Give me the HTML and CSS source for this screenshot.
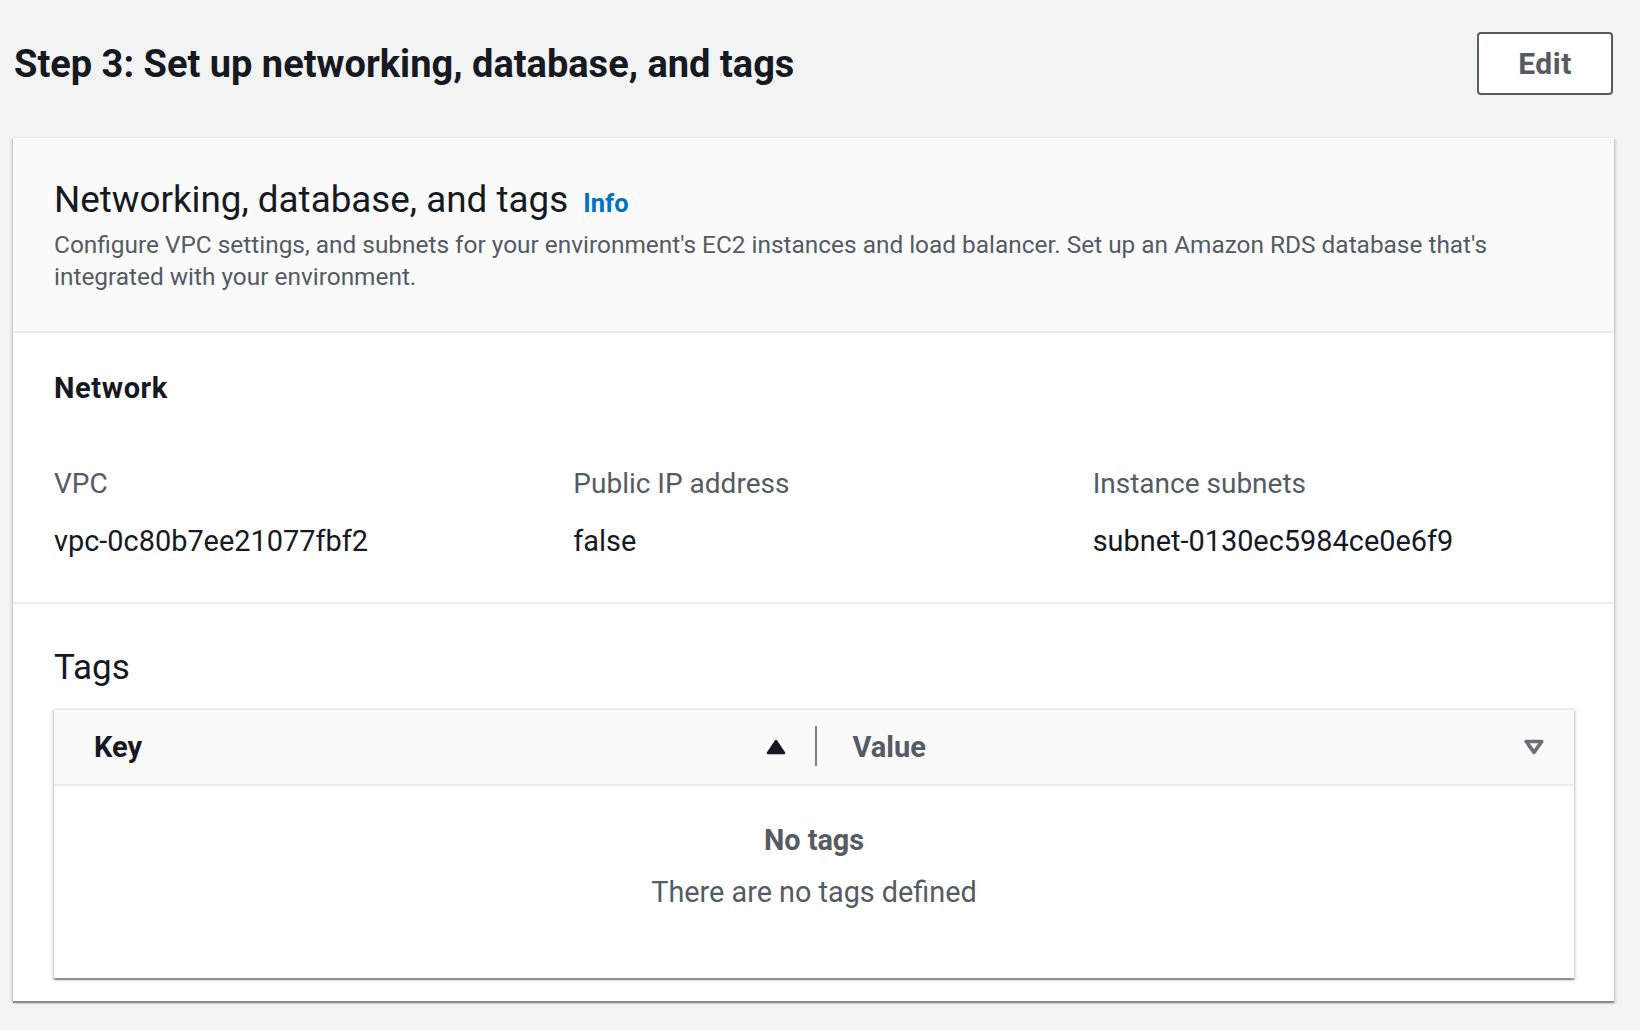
FILE: index.html
```html
<!DOCTYPE html>
<html lang="en">
<head>
<meta charset="utf-8">
<title>Step 3: Set up networking, database, and tags</title>
<link rel="stylesheet" href="styles.css">
</head>
<body>
<div class="page">
  <header class="step-header">
    <h2 class="step-title">Step 3: Set up networking, database, and tags</h2>
    <button class="btn" type="button">Edit</button>
  </header>
  <section class="card">
    <div class="card-header">
      <h3 class="card-title">Networking, database, and tags <a class="info" href="#">Info</a></h3>
      <p class="card-desc">Configure VPC settings, and subnets for your environment's EC2 instances and load balancer. Set up an Amazon RDS database that's integrated with your environment.</p>
    </div>
    <div class="card-section network">
      <h4 class="sub-title">Network</h4>
      <div class="kv-grid">
        <div class="kv">
          <div class="kv-label">VPC</div>
          <div class="kv-value">vpc-0c80b7ee21077fbf2</div>
        </div>
        <div class="kv">
          <div class="kv-label">Public IP address</div>
          <div class="kv-value">false</div>
        </div>
        <div class="kv">
          <div class="kv-label">Instance subnets</div>
          <div class="kv-value">subnet-0130ec5984ce0e6f9</div>
        </div>
      </div>
    </div>
    <div class="card-section tags">
      <h3 class="tags-title">Tags</h3>
      <div class="table">
        <div class="thead">
          <div class="th th-key">
            <span>Key</span>
            <svg class="sort-icon" width="20" height="16" viewBox="0 0 20 16"><path d="M10 2 L18 14 L2 14 Z" fill="#16191f" stroke="#16191f" stroke-width="2.5" stroke-linejoin="round"/></svg>
          </div>
          <div class="th th-value">
            <span>Value</span>
            <svg class="sort-icon" width="20" height="16" viewBox="0 0 20 16"><path d="M2.2 2.5 L17.8 2.5 L10 13.4 Z" fill="none" stroke="#687078" stroke-width="3.6" stroke-linejoin="round"/></svg>
          </div>
        </div>
        <div class="tbody">
          <div class="empty-title">No tags</div>
          <div class="empty-desc">There are no tags defined</div>
        </div>
      </div>
    </div>
  </section>
</div>
</body>
</html>
```

FILE: styles.css
```css
* { box-sizing: border-box; }
html, body { margin: 0; padding: 0; }
body {
  background: #f2f3f3;
  font-family: Roboto, "Liberation Sans", Arial, sans-serif;
  color: #16191f;
  width: 1640px;
  height: 1030px;
  overflow: hidden;
}
.page {
  padding: 32px 26px 0 13px;
}
.step-header {
  display: flex;
  align-items: center;
  justify-content: space-between;
  height: 63px;
}
.step-title {
  margin: 0 0 0 1px;
  font-size: 38px;
  line-height: 48px;
  font-weight: 700;
  color: #16191f;
}
.btn {
  width: 136px;
  height: 63px;
  border: 2px solid #545b64;
  border-radius: 4px;
  background: #fff;
  color: #545b64;
  font-family: inherit;
  font-size: 30px;
  letter-spacing: 0.5px;
  font-weight: 700;
  padding: 0;
  margin-right: 1px;
}
.card {
  margin-top: 42px;
  background: #fff;
  border-top: 1px solid #eaeded;
  box-shadow: 0 2px 1px 0 rgba(0,28,36,.35), 2px 2px 2px 0 rgba(0,28,36,.12), -2px 2px 2px 0 rgba(0,28,36,.12);
}
.card-header {
  background: #fafafa;
  padding: 40px 40px 38px 41px;
  border-bottom: 2px solid #eaeded;
}
.card-title {
  margin: 0;
  font-size: 36.8px;
  line-height: 44px;
  font-weight: 400;
  color: #16191f;
}
.info {
  margin-left: 6px;
  font-size: 25.5px;
  font-weight: 700;
  color: #0073bb;
  text-decoration: none;
}
.card-desc {
  margin: 4px 0 0;
  font-size: 24.4px;
  line-height: 32px;
  color: #545b64;
}
.card-section {
  padding: 0 40px 0 41px;
}
.network {
  padding-top: 35px;
  padding-bottom: 41px;
  border-bottom: 2px solid #eaeded;
}
.sub-title {
  margin: 0;
  font-size: 29px;
  letter-spacing: 0.6px;
  line-height: 40px;
  font-weight: 700;
}
.kv-grid {
  margin-top: 56px;
  display: grid;
  grid-template-columns: repeat(3, 1fr);
  column-gap: 38px;
}
.kv-label {
  font-size: 28px;
  line-height: 40px;
  color: #545b64;
}
.kv-value {
  margin-top: 17px;
  font-size: 28.9px;
  line-height: 40px;
  color: #16191f;
}
.tags {
  padding-top: 42px;
  padding-bottom: 23px;
}
.tags-title {
  margin: 0;
  font-size: 35px;
  line-height: 44px;
  font-weight: 400;
}
.table {
  margin-top: 18px;
  background: #fff;
  border-top: 2px solid #eaeded;
  box-shadow: 0 2px 1px 0 rgba(0,28,36,.35), 2px 2px 2px 0 rgba(0,28,36,.12), -2px 2px 2px 0 rgba(0,28,36,.12);
}
.thead {
  display: flex;
  height: 76px;
  background: #fafafa;
  border-bottom: 2px solid #eaeded;
}
.th {
  flex: 1;
  display: flex;
  align-items: center;
  justify-content: space-between;
  font-size: 29px;
  font-weight: 700;
  position: relative;
}
.th-key {
  padding: 0 29px 0 40px;
  color: #16191f;
}
.th-value {
  padding: 0 30px 0 38px;
  color: #545b64;
}
.th-value::before {
  content: "";
  position: absolute;
  left: 0;
  top: 16px;
  width: 2px;
  height: 40px;
  background: #7d8590;
}
.sort-icon { display: block; }
.tbody {
  height: 192px;
  padding-top: 34px;
  text-align: center;
  color: #545b64;
}
.empty-title {
  font-size: 28.8px;
  line-height: 40px;
  font-weight: 700;
}
.empty-desc {
  margin-top: 12px;
  font-size: 28.8px;
  line-height: 40px;
}
```
